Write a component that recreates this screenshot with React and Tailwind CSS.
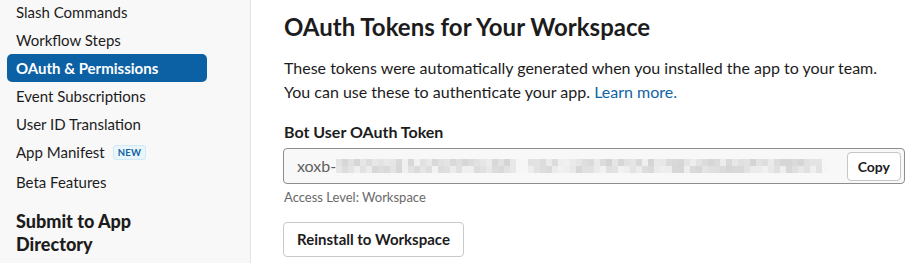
import React from "react";

const navItems = [
  { name: "Slash Commands" },
  { name: "Workflow Steps" },
  { name: "OAuth & Permissions", active: true },
  { name: "Event Subscriptions" },
  { name: "User ID Translation" },
  { name: "App Manifest", badge: "NEW" },
  { name: "Beta Features" },
];

// pseudo-random greys for the blurred token
const blurCells = (() => {
  const cells = [];
  let seed = 7;
  for (let i = 0; i < 82; i++) {
    seed = (seed * 9301 + 49297) % 233280;
    const r = seed / 233280;
    const gap = i === 30 || i === 31 || i === 81;
    const top = gap ? 246 : Math.round(212 + r * 30);
    seed = (seed * 9301 + 49297) % 233280;
    const r2 = seed / 233280;
    const bottom = gap ? 246 : Math.round(214 + r2 * 28);
    cells.push([top, bottom]);
  }
  return cells;
})();

function Sidebar() {
  return (
    <aside className="w-[251px] shrink-0 bg-[#f8f8f8] border-r border-[#e3e3e3] pl-[7px] pr-[43px]">
      <nav className="flex flex-col">
        {navItems.map((item) => (
          <div
            key={item.name}
            className={`flex items-center h-[28px] px-[9px] rounded-[5px] text-[15px] ${
              item.active ? "bg-[#0b61a4] text-white font-bold" : "text-[#1d1c1d]"
            } ${item.name === "Beta Features" ? "mt-[2px]" : ""} ${item.name === "Slash Commands" ? "-mt-[2px]" : ""}`}
          >
            <span>{item.name}</span>
            {item.badge && (
              <span className="ml-[8px] px-[4px] h-[15px] leading-[14px] rounded-[3px] bg-[#e8f5fa] border border-[#d0e9f5] text-[#1264a3] text-[9.5px] font-bold tracking-[0.3px]">
                {item.badge}
              </span>
            )}
          </div>
        ))}
      </nav>
      <div className="pl-[9px] mt-[14px] text-[18px] leading-[23px] font-black text-[#1d1c1d]">
        Submit to App
        <br />
        Directory
      </div>
    </aside>
  );
}

function TokenBlur() {
  return (
    <div className="flex">
      {blurCells.map(([a, b], i) => (
        <div key={i} className="flex flex-col w-[6px]">
          <div className="h-[7px]" style={{ background: `rgb(${a},${a},${a})` }} />
          <div className="h-[7px]" style={{ background: `rgb(${b},${b},${b})` }} />
        </div>
      ))}
    </div>
  );
}

export default function App() {
  return (
    <div
      className="flex w-[920px] h-[263px] overflow-hidden bg-white text-[#1d1c1d]"
      style={{ fontFamily: "Lato, 'Noto Sans', sans-serif" }}
    >
      <Sidebar />
      <main className="flex-1 pl-[33px] pr-[10px]">
        <h1 className="text-[24px] font-bold leading-[30px] mt-[12px]">
          OAuth Tokens for Your Workspace
        </h1>
        <p className="mt-[14px] text-[16px] leading-[24px] whitespace-nowrap">
          These tokens were automatically generated when you installed the app to your team.
          <br />
          You can use these to authenticate your app.{" "}
          <span className="text-[#1264a3]">Learn more.</span>
        </p>
        <div className="mt-[18px] text-[16px] font-bold leading-[20px]">Bot User OAuth Token</div>
        <div className="mt-[6px] flex items-center h-[36px] w-[622px] -ml-[1px] rounded-[4px] border border-[#8d8d8d] bg-[#f8f8f8] pl-[13px] pr-[3px]">
          <span className="text-[16px] text-[#616061]">xoxb-</span>
          <TokenBlur />
          <div className="flex-1" />
          <button className="h-[29px] px-[10px] rounded-[4px] border border-[#c6c6c6] bg-white text-[14px] font-bold text-[#1d1c1d]">
            Copy
          </button>
        </div>
        <div className="mt-[5px] text-[13px] text-[#696969] leading-[16px]">Access Level: Workspace</div>
        <button className="mt-[17px] -ml-[1px] h-[35px] w-[181px] rounded-[4px] border border-[#c9c9c9] bg-white text-[15px] font-bold text-[#1d1c1d]">
          Reinstall to Workspace
        </button>
      </main>
    </div>
  );
}
